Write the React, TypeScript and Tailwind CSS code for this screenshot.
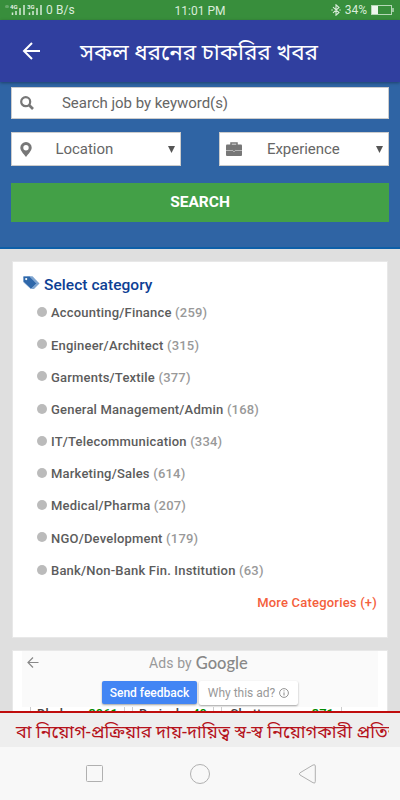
import React from 'react';

interface Category {
  name: string;
  count: number;
}

const categories: Category[] = [
  { name: 'Accounting/Finance', count: 259 },
  { name: 'Engineer/Architect', count: 315 },
  { name: 'Garments/Textile', count: 377 },
  { name: 'General Management/Admin', count: 168 },
  { name: 'IT/Telecommunication', count: 334 },
  { name: 'Marketing/Sales', count: 614 },
  { name: 'Medical/Pharma', count: 207 },
  { name: 'NGO/Development', count: 179 },
  { name: 'Bank/Non-Bank Fin. Institution', count: 63 },
];

function SignalBars({ label }: { label: string }) {
  return (
    <svg width="17" height="12" viewBox="0 0 17 12">
      <text x="0" y="5" fontSize="6" fontWeight="700" fill="#e3f1e4" fontFamily="Roboto">{label}</text>
      <path d="M2.5 8.5V11M6 7V11M10 4V11M14 1V11" stroke="#d5ead6" strokeWidth="1.5" fill="none" />
    </svg>
  );
}

function StatusBar() {
  return (
    <div className="flex h-5 items-center bg-[#388e3c] text-[12px] leading-5 text-[#d9ecda]">
      <div className="flex w-[130px] items-center pl-[5px]">
        <span className="mr-[1px] mt-[5px] h-[3px] w-[4px] self-start rounded-full bg-[#68a96b]" />
        <SignalBars label="4G" />
        <SignalBars label="3G" />
        <span className="ml-[2px] whitespace-nowrap tracking-[0.1px]">0 B/s</span>
      </div>
      <div className="flex-1 pt-px text-center">11:01 PM</div>
      <div className="flex w-[130px] items-center justify-end pr-[6px]">
        <svg width="10" height="12" viewBox="0 0 10 12" className="mr-[4px]">
          <path d="M2 3.2L8 8.5L5 11.2V0.8L8 3.5L2 8.8M0.3 6H1.8M8.3 6H9.8" fill="none" stroke="#d9ecda" strokeWidth="1.1" />
        </svg>
        <span>34%</span>
        <svg width="23" height="10" viewBox="0 0 23 10" className="ml-[4px]">
          <rect x="0.5" y="0.5" width="20" height="9" fill="none" stroke="#b5d8b6" />
          <rect x="1" y="1" width="6" height="8" fill="#eef7ee" />
          <path d="M22 3V7" stroke="#d9ecda" strokeWidth="1.2" />
        </svg>
      </div>
    </div>
  );
}

function AppBar() {
  return (
    <header className="relative flex h-[62px] items-center bg-[#303f9f] pl-[22px] shadow-[0_1px_3px_rgba(0,0,0,0.35)]">
      <svg width="19" height="18" viewBox="0 0 19 18">
        <path d="M18 9H2M10 1L2 9L10 17" fill="none" stroke="#fff" strokeWidth="2" />
      </svg>
      <h1 className="ml-[39px] whitespace-nowrap pt-[2px] text-[22.5px] leading-8 text-white">সকল ধরনের চাকরির খবর</h1>
    </header>
  );
}

function Caret() {
  return (
    <svg width="7" height="7" viewBox="0 0 7 7">
      <path d="M0 0H7L3.5 7Z" fill="#555" />
    </svg>
  );
}

function SearchIcon() {
  return (
    <svg width="14" height="14" viewBox="0 0 14 14">
      <circle cx="5.7" cy="5.7" r="4.5" fill="none" stroke="#777" strokeWidth="2.2" />
      <path d="M9 9L13 13" stroke="#777" strokeWidth="2.6" />
    </svg>
  );
}

function PinIcon() {
  return (
    <svg width="12" height="15" viewBox="0 0 12 15">
      <path
        fillRule="evenodd"
        d="M6 0A5.7 5.7 0 0 1 11.7 5.7C11.7 8.6 8.5 11.6 6 15C3.5 11.6 0.3 8.6 0.3 5.7A5.7 5.7 0 0 1 6 0ZM6 3A2.7 2.7 0 1 0 6 8.4A2.7 2.7 0 1 0 6 3Z"
        fill="#777"
      />
    </svg>
  );
}

function BriefcaseIcon() {
  return (
    <svg width="16" height="14" viewBox="0 0 16 14">
      <path d="M5 3V1H11V3" fill="none" stroke="#777" strokeWidth="1.5" />
      <rect x="0" y="2.5" width="16" height="11.5" rx="1" fill="#777" />
      <path d="M0 8.5H6M10 8.5H16M6 8L8 9.8L10 8" fill="none" stroke="#c8c8c8" strokeWidth="0.8" />
    </svg>
  );
}

function TagsIcon() {
  return (
    <svg width="17" height="14" viewBox="0 0 17 14" className="-mt-[5px] mr-[4px]">
      <path d="M4 0.3H9.5L16.5 7.5L11 13H9Z" fill="#7fa5d0" />
      <path d="M0.3 1.3Q0.3 0.3 1.3 0.3H6.5L13.6 7.4L8 13L0.3 5.8Z" fill="#2f68aa" stroke="#8fb0d6" strokeWidth="0.6" />
      <circle cx="3.2" cy="3.1" r="1.1" fill="#fff" />
    </svg>
  );
}

function SearchForm() {
  return (
    <section className="h-[167px] border-b-2 border-[#0d5fa8] bg-[#2f64a4] px-[11px] pt-[5px] text-[15px] text-[#666]">
      <div className="flex h-8 items-center border border-[#ccc] bg-white pl-[8px]">
        <SearchIcon />
        <span className="ml-[28px] tracking-[-0.04px]">Search job by keyword(s)</span>
      </div>
      <div className="mt-[13px] flex justify-between">
        <div className="flex h-[34px] w-[170px] items-center border border-[#ccc] bg-white pl-[8px] pr-[5px]">
          <PinIcon />
          <span className="ml-[23.5px] flex-1 tracking-[-0.05px]">Location</span>
          <Caret />
        </div>
        <div className="flex h-[34px] w-[170px] items-center border border-[#ccc] bg-white pl-[6px] pr-[5px]">
          <BriefcaseIcon />
          <span className="ml-[25px] flex-1 tracking-[-0.05px]">Experience</span>
          <Caret />
        </div>
      </div>
      <button className="mt-[17px] block h-[39px] w-full bg-[#43a047] pt-px text-[15.5px] font-bold text-white">SEARCH</button>
    </section>
  );
}

function CategoryCard() {
  return (
    <section className="mx-3 mt-[12px] h-[377px] border border-[#e8e8e8] bg-white">
      <h2 className="flex h-[35px] items-center pl-[10px] pt-[12px] text-[15.5px] font-medium tracking-[0.05px] text-[#0d3f94]">
        <TagsIcon />
        Select category
      </h2>
      <ul>
        {categories.map((category) => (
          <li key={category.name} className="flex h-[32.2px] items-center pl-[24px] text-[13px] font-medium text-[#5c5c5c]">
            <span className="-mt-[2px] mr-[4px] h-[10px] w-[10px] rounded-full bg-[#bbb]" />
            <span className="tracking-[0.2px]">
              {category.name} <span className="text-[#999]">({category.count})</span>
            </span>
          </li>
        ))}
      </ul>
      <div className="mt-[6px] pr-[10px] text-right text-[13px] font-medium tracking-[0.2px] text-[#f4603c]">More Categories (+)</div>
    </section>
  );
}

function AdCard() {
  return (
    <section className="mx-3 mt-[12px] h-[62px] overflow-hidden border-x border-t border-[#e8e8e8] bg-white px-[9px]">
      <div className="h-[56px] bg-[#fafafa]">
        <div className="flex h-[25px] items-center pl-[5px]">
          <svg width="12" height="11" viewBox="0 0 12 11" className="-mt-[3px]">
            <path d="M11.5 5.5H1M6 0.5L1 5.5L6 10.5" fill="none" stroke="#888" strokeWidth="1.2" />
          </svg>
          <span className="ml-[110px] text-[14px] tracking-[0.1px] text-[#999]">Ads by</span>
          <span className="ml-[4px] text-[16.5px] font-medium text-[#888] font-['Lato']">Google</span>
        </div>
        <div className="flex h-[30px] items-center pl-[80px] pt-[3px] text-[12px]">
          <span className="flex h-[23px] w-[95px] items-center justify-center rounded-[2px] bg-[#4285f4] font-medium text-white shadow-[0_1px_2px_rgba(0,0,0,0.35)]">Send feedback</span>
          <span className="ml-[2px] flex h-[24px] w-[99px] items-center justify-center rounded-[2px] bg-white text-[#999] shadow-[0_1px_2px_rgba(0,0,0,0.35)]">
            Why this ad?
            <svg width="10" height="10" viewBox="0 0 10 10" className="ml-[4px]">
              <circle cx="5" cy="5" r="4.4" fill="none" stroke="#888" strokeWidth="0.9" />
              <path d="M5 4.4V7.5M5 2.4V3.4" stroke="#888" strokeWidth="1" />
            </svg>
          </span>
        </div>
      </div>
      <div className="flex items-start pl-[8px] text-[13px] font-medium leading-[14px] text-[#444]">
        <div className="flex w-[95px] border-x border-[#ccc] pl-[6px]">Dhaka<span className="ml-auto mr-[6px] text-[#008a00]">3961</span></div>
        <div className="ml-[7px] flex w-[82px] border-x border-[#ccc] pl-[6px]">Barisal<span className="ml-auto mr-[6px] text-[#008a00]">49</span></div>
        <div className="ml-[7px] flex w-[121px] border-x border-[#ccc] pl-[8px]">Chattogram<span className="ml-auto mr-[7px] text-[#008a00]">371</span></div>
      </div>
    </section>
  );
}

function NoticeTicker() {
  return (
    <div className="h-[36px] shrink-0 border-t-2 border-[#bf0d0d] bg-[#eee] px-[11px]">
      <div className="h-[34px] overflow-hidden whitespace-nowrap pl-[5px] text-[18px] leading-[38px] text-[#b5121b]">
        বা নিয়োগ-প্রক্রিয়ার দায়-দায়িত্ব স্ব-স্ব নিয়োগকারী প্রতিষ্ঠানের
      </div>
    </div>
  );
}

function NavBar() {
  return (
    <nav className="flex h-[53px] items-center bg-[#f8f8f8] pl-[86px]">
      <svg width="17" height="17" viewBox="0 0 17 17">
        <rect x="0.5" y="0.5" width="16" height="16" rx="1" fill="none" stroke="#b0b0b0" />
      </svg>
      <svg width="20" height="20" viewBox="0 0 20 20" className="ml-[87px]">
        <circle cx="10" cy="10" r="9.5" fill="none" stroke="#b0b0b0" />
      </svg>
      <svg width="17" height="20" viewBox="0 0 17 20" className="ml-[89px]">
        <path d="M1 8.8L14 1Q16.3 0 16.3 2V17.5Q16.3 20 14 18.7L1 11Q-0.5 9.9 1 8.8Z" fill="none" stroke="#b0b0b0" />
      </svg>
    </nav>
  );
}

export default function App() {
  return (
    <div className="flex h-[800px] w-[400px] flex-col overflow-hidden bg-[#dfdfdf] font-['Roboto','Noto_Sans_Bengali','Noto_Sans',sans-serif]">
      <StatusBar />
      <AppBar />
      <main className="h-[629px] overflow-hidden">
        <SearchForm />
        <CategoryCard />
        <AdCard />
      </main>
      <NoticeTicker />
      <NavBar />
    </div>
  );
}
